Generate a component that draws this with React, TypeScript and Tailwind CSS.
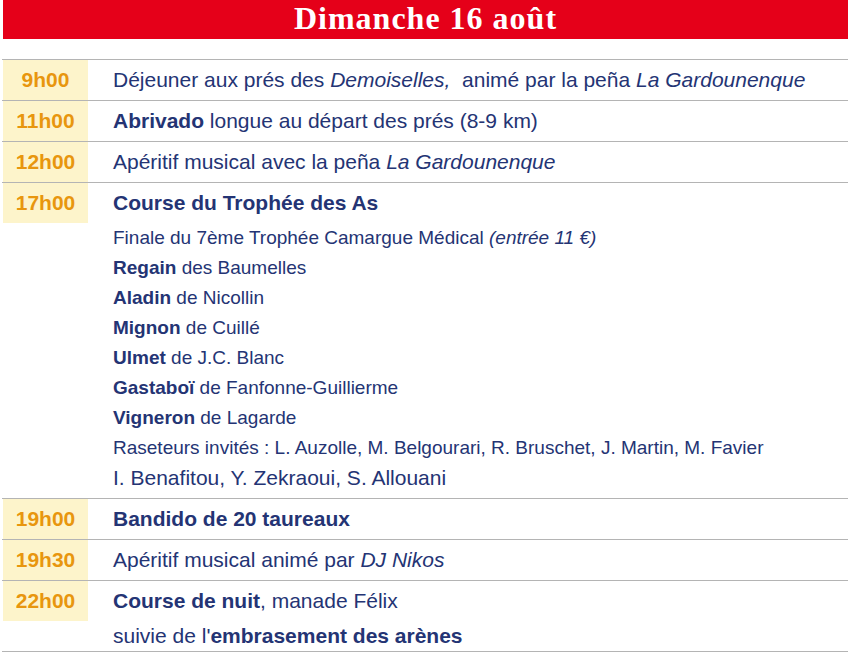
const navy = "text-[#243474]";

type Row = {
  time: string;
  main: React.ReactNode;
  subs?: { node: React.ReactNode; big?: boolean }[];
  padded?: boolean;
};

const rows: Row[] = [
  {
    time: "9h00",
    main: (
      <>
        Déjeuner aux prés des <i>Demoiselles,</i>&nbsp; animé par la peña{" "}
        <i>La Gardounenque</i>
      </>
    ),
  },
  {
    time: "11h00",
    main: (
      <>
        <b>Abrivado</b> longue au départ des prés (8-9 km)
      </>
    ),
  },
  {
    time: "12h00",
    main: (
      <>
        Apéritif musical avec la peña <i>La Gardounenque</i>
      </>
    ),
  },
  {
    time: "17h00",
    main: <b>Course du Trophée des As</b>,
    padded: true,
    subs: [
      {
        node: (
          <>
            Finale du 7ème Trophée Camargue Médical <i>(entrée 11 €)</i>
          </>
        ),
      },
      { node: <><b>Regain</b> des Baumelles</> },
      { node: <><b>Aladin</b> de Nicollin</> },
      { node: <><b>Mignon</b> de Cuillé</> },
      { node: <><b>Ulmet</b> de J.C. Blanc</> },
      { node: <><b>Gastaboï</b> de Fanfonne-Guillierme</> },
      { node: <><b>Vigneron</b> de Lagarde</> },
      {
        node: (
          <>
            Raseteurs invités : L. Auzolle, M. Belgourari, R. Bruschet, J.
            Martin, M. Favier
          </>
        ),
      },
      { node: <>I. Benafitou, Y. Zekraoui, S. Allouani</>, big: true },
    ],
  },
  { time: "19h00", main: <b>Bandido de 20 taureaux</b> },
  {
    time: "19h30",
    main: (
      <>
        Apéritif musical animé par <i>DJ Nikos</i>
      </>
    ),
  },
  {
    time: "22h00",
    main: (
      <>
        <b>Course de nuit</b>, manade Félix
      </>
    ),
    subs: [
      {
        node: (
          <>
            suivie de l'<b>embrasement des arènes</b>
          </>
        ),
        big: true,
      },
    ],
  },
];

export default function App() {
  return (
    <div className="w-[850px] h-[652px] bg-white font-['Liberation_Sans',Arial,sans-serif] overflow-hidden">
      <div className="ml-[3px] mr-[2px] h-[39px] bg-[#e50019] flex items-center justify-center">
        <h1 className="font-['Liberation_Serif',serif] font-bold text-white text-[32px] tracking-[1px] leading-none pb-[3px]">
          Dimanche 16 août
        </h1>
      </div>

      <div className="mt-[20px] ml-[2px] mr-[2px] border-t border-[#b4b4b4]">
        {rows.map((row) => (
          <div key={row.time} className="border-b border-[#b4b4b4]">
            <div className="flex">
              <div className="ml-px w-[85px] h-[40px] bg-[#fdf4cb] flex items-center justify-center text-[#e8960e] font-bold text-[21px]">
                {row.time}
              </div>
              <div
                className={`pl-[25px] h-[40px] flex items-center text-[21px] whitespace-nowrap ${navy}`}
              >
                <span>{row.main}</span>
              </div>
            </div>
            {row.subs && (
              <div
                className={`pl-[111px] whitespace-nowrap ${navy} ${row.padded ? "pb-[5px]" : ""}`}
              >
                {row.subs.map((s, i) => (
                  <div
                    key={i}
                    className={`leading-[30px] ${s.big ? "text-[21px]" : "text-[19px]"}`}
                  >
                    {s.node}
                  </div>
                ))}
              </div>
            )}
          </div>
        ))}
      </div>
    </div>
  );
}
